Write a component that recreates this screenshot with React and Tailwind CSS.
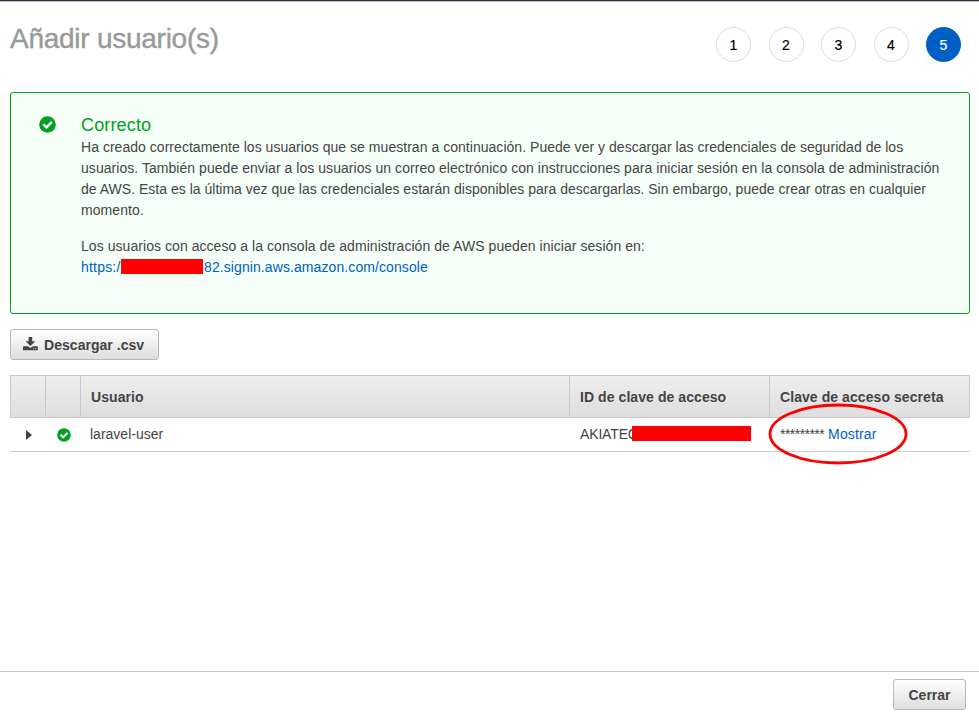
import React from 'react';

const steps = [1, 2, 3, 4, 5];

function CheckIcon({ className }) {
  return (
    <svg viewBox="0 0 17 17" className={className}>
      <circle cx="8.500" cy="8.500" r="8.300" fill="#00a022" />
      <path d="M4.300 8.300L7.500 11.300L12.900 5.900" fill="none" stroke="#ffffff" strokeWidth="2.500" />
    </svg>
  );
}

function DownloadIcon() {
  return (
    <svg viewBox="0 0 15 14" className="-mt-[4px] h-[14px] w-[15px]" fill="#444444">
      <path d="M5.600 0h3.600v4.300h3L7.400 9 2.600 4.300h3z" />
      <path
        fillRule="evenodd"
        d="M.6 9.300h4.200l2.600 1.800 2.600-1.800h4.200q.6 0 .6.6v2.800q0 .6-.6.6H.6q-.6 0-.6-.6V9.900q0-.6.6-.6zM10 11.300h1v1h-1zM12.200 11.300h1v1h-1z"
      />
    </svg>
  );
}

function Button({ children, className }) {
  return (
    <button
      className={`flex h-[31px] items-center rounded-[3px] border border-[#b8b8b8] bg-linear-to-b from-white to-[#dedede] pt-[2px] text-[14px] font-bold text-[#444444] ${className}`}
    >
      {children}
    </button>
  );
}

export default function App() {
  return (
    <div className="flex h-[717px] w-[979px] flex-col overflow-hidden bg-white font-['Helvetica_Neue','Liberation_Sans',Arial,sans-serif] text-[14px] text-[#444444]">
      <div className="h-[2px] shrink-0 border-b border-[#c3c7ce] bg-[#232f3e]" />

      <header className="flex h-[90px] shrink-0 justify-between pl-[10px] pr-[18px]">
        <h1 className="mt-[19px] text-[28px] leading-[36px] tracking-[-0.26px] text-[#999999] [-webkit-text-stroke:0.4px_#999999]">
          Añadir usuario(s)
        </h1>
        <ol className="mt-[25px] flex gap-[17.5px]">
          {steps.map((n) => (
            <li
              key={n}
              className={`flex size-[35px] items-center justify-center rounded-full border pt-[1px] text-[14px] [-webkit-text-stroke:0.2px_currentColor] ${
                n === 5 ? 'border-[#005fc4] bg-[#005fc4] text-white' : 'border-[#dddddd] text-black'
              }`}
            >
              {n}
            </li>
          ))}
        </ol>
      </header>

      <main className="flex flex-1 flex-col pl-[10px] pr-[9px]">
        <section className="flex h-[222px] shrink-0 rounded-[3px] border border-[#00a022] bg-[#f6fef8] pl-[27px]">
          <CheckIcon className="ml-[0.5px] mt-[22.5px] size-[17px] shrink-0" />
          <div className="ml-[25.5px] whitespace-nowrap leading-[21px]">
            <h2 className="mt-[21px] text-[18px] leading-[23px] tracking-[0.15px] text-[#00a022]">Correcto</h2>
            <p>
              <span className="block tracking-[0.034px]">Ha creado correctamente los usuarios que se muestran a continuación. Puede ver y descargar las credenciales de seguridad de los</span>
              <span className="block tracking-[0.047px]">usuarios. También puede enviar a los usuarios un correo electrónico con instrucciones para iniciar sesión en la consola de administración</span>
              <span className="block tracking-[0.014px]">de AWS. Esta es la última vez que las credenciales estarán disponibles para descargarlas. Sin embargo, puede crear otras en cualquier</span>
              <span className="block tracking-[0.08px]">momento.</span>
            </p>
            <p className="mt-[15px] tracking-[0.055px]">Los usuarios con acceso a la consola de administración de AWS pueden iniciar sesión en:</p>
            <a className="flex items-center tracking-[0.09px] text-[#0060bf]">
              <span className="w-[40px] tracking-[0.2px]">https:/</span>
              <span className="-mt-[2px] mr-px h-[15px] w-[82px] bg-[#ff0000]" />
              82.signin.aws.amazon.com/console
            </a>
          </div>
        </section>

        <Button className="mt-[15px] w-[149px] shrink-0 gap-[6px] pl-[12px]">
          <DownloadIcon />
          <span className="whitespace-nowrap tracking-[0.04px]">Descargar .csv</span>
        </Button>

        <div className="relative mt-[15px]">
          <div className="grid h-[43px] grid-cols-[35px_35px_489px_200px_199px] border border-[#c8c8c8] bg-linear-to-b from-[#eeeeee] to-[#dedede] font-bold leading-[41px] tracking-[0.07px]">
            <div className="border-r border-[#c8c8c8]" />
            <div className="border-r border-[#c8c8c8]" />
            <div className="border-r border-[#c8c8c8] pl-[10px] pt-px leading-[40px]">Usuario</div>
            <div className="border-r border-[#c8c8c8] pl-[10px] pt-px leading-[40px]">ID de clave de acceso</div>
            <div className="whitespace-nowrap pl-[10px] pt-px leading-[40px]">Clave de acceso secreta</div>
          </div>
          <div className="grid h-[34px] grid-cols-[36px_34px_490px_200px_200px] border-b border-[#cccccc] leading-[33px]">
            <div className="flex items-center pl-[16px]">
              <svg viewBox="0 0 6 10" className="h-[10px] w-[6px]">
                <path d="M0 0L6 5L0 10Z" fill="#444444" />
              </svg>
            </div>
            <div className="flex items-center pl-[11px]">
              <CheckIcon className="size-[14px]" />
            </div>
            <div className="pl-[10px]">laravel-user</div>
            <div className="flex pl-[10px]">
              <span className="w-[52px] whitespace-nowrap tracking-[-0.15px]">AKIATEC</span>
              <span className="relative mt-[8px] h-[15px] w-[119px] bg-[#ff0000]" />
            </div>
            <div className="whitespace-nowrap pl-[10px]">
              <span className="tracking-[-0.54px]">*********</span> <a className="tracking-[0.15px] text-[#0060bf]">Mostrar</a>
            </div>
          </div>
          <svg className="absolute left-[757px] top-[27px] h-[63px] w-[142px]" viewBox="0 0 142 63">
            <ellipse cx="71" cy="32" rx="68" ry="29" fill="none" stroke="#ff0000" strokeWidth="2.800" />
          </svg>
        </div>
      </main>

      <footer className="flex h-[46px] shrink-0 justify-end border-t border-[#c4c4c4] pr-[13px] pt-[7px]">
        <Button className="w-[73px] justify-center">Cerrar</Button>
      </footer>
    </div>
  );
}
